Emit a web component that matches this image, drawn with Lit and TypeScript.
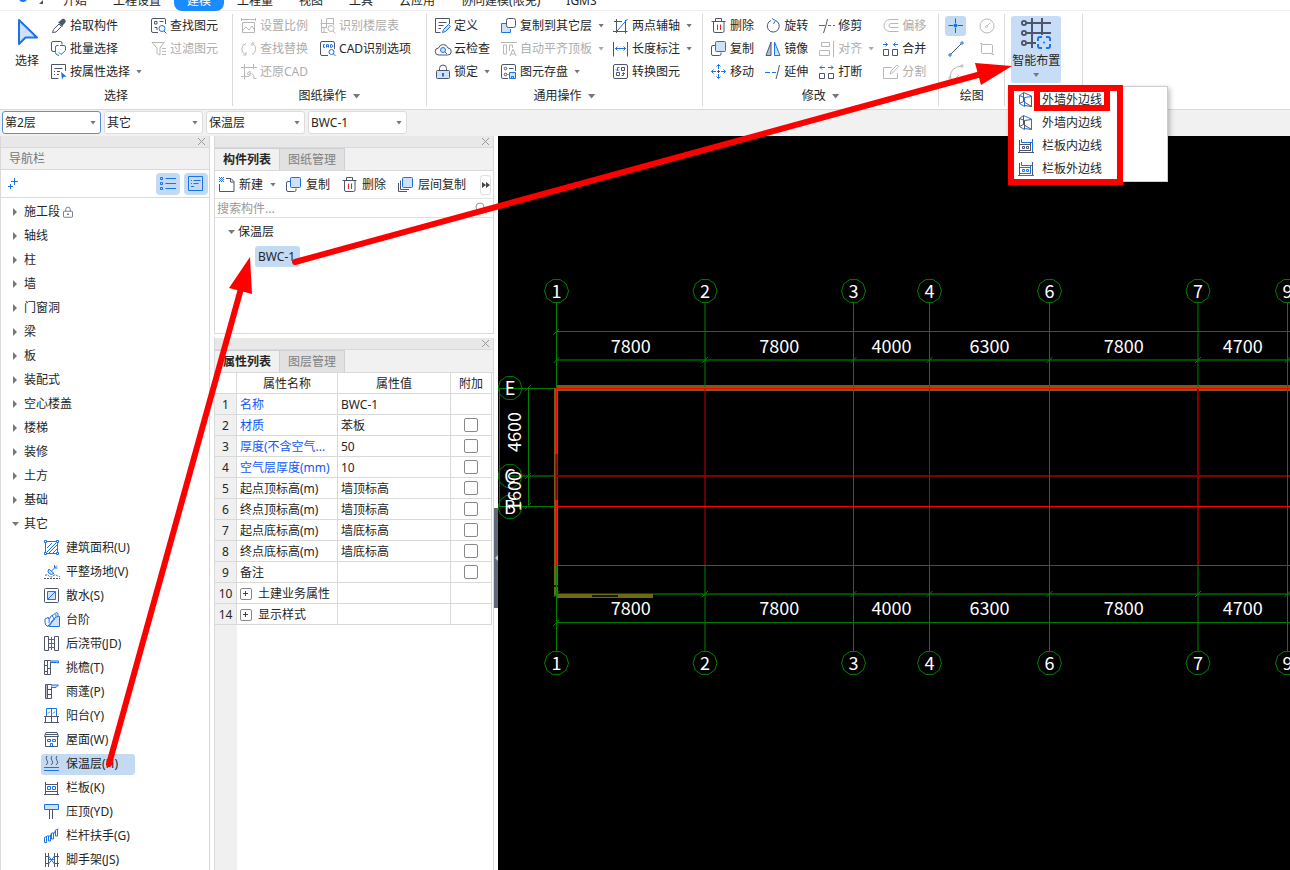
import { LitElement, html, css, svg, nothing, type SVGTemplateResult } from "lit";
import { customElement } from "lit/decorators.js";
import { classMap } from "lit/directives/class-map.js";

/* Icon strokes: .d dark, .b blue, .r red; .f adds the pale blue fill, .s a solid blue one. */
const ICONS: Record<string, SVGTemplateResult> = {
  picker: svg`<path class="d" d="M1.500 14.500l1-3L8 6l2.500 2.500-5.500 5.500z"/><path class="k" d="M7 4l1.500-.5 2-2a2 2 0 0 1 3.500 3.500l-2 2L11.500 9z"/>`,
  batch: svg`<path class="d" d="M4.500 10.500H2Q.5 10.500.5 9V2Q.5.5 2 .5h7.500Q11 .5 11 2v1.500"/><path class="b" d="M7.500 4.500H6Q4.500 4.500 4.500 6v5.500q0 2 2 2.500L8 14.500M9 4.500h4Q14.500 4.500 14.500 6v3"/><path class="b" d="M8 11.500l2 2 4.500-4"/>`,
  byprop: svg`<path class="d" d="M14.500 7V.5H.5v14h7M3.500 4.500h8M3 7.500h1M6 7.500h3M3 10.500h1M6 10.500h2"/><path class="s" d="M10 8l5.500 4.500-3 .5-1.500 2.500z"/>`,
  find: svg`<path class="d" d="M14.500 6V2Q14.500.5 13 .5H2Q.5.500.5 2v11q0 1.500 1.500 1.500h5M3.500 3.500h2.500V6H3.500zM3.500 9.500h2.500V12M8.500 3.500h4"/><circle class="b" cx="11" cy="10.500" r="3"/><path class="b" d="M13 13l2.500 2.500"/>`,
  filter: svg`<path class="d" d="M1 1.500h12L9 7v7l-3-1.500V7zM11 7.500h4M11 10.500h4M11 13.500h4"/>`,
  scale: svg`<path class="d" d="M.5 0v3M14.500 0v3M.5 1.500h14M1.500 4.500h12v10h-12zM2 12l3-3 3 3 3-4 2.500 4"/>`,
  floor: svg`<path class="d" d="M6.500 1v9M.5 5.500h13V.5h-7M13.500 1v6M1.500 1v13.500h6M1 9.500h5.500M4 9.500v5"/><circle class="b" cx="11" cy="10.500" r="3"/><path class="b" d="M13 13l2.500 2.500"/>`,
  replace: svg`<path class="d" d="M4 13.500A6 6 0 0 1 5 2.500M11 13.500A6 6 0 0 0 12 3M2.500 14H5v-3M13.500 2H11v3"/>`,
  cad: svg`<path class="d" d="M14.500 8V2Q14.500.5 13 .5H2Q.5.500.5 2v11q0 1.500 1.500 1.500h6"/><path class="b" d="M5 3.700H3.500v2.600H5M6.500 6.500V3.700h2v2.800M6.500 5.300h2M10.500 3.700v2.600H12l1-1.300-1-1.300z"/><circle class="b" cx="11.500" cy="11" r="2.500"/><path class="b" d="M13.500 13l2 2"/>`,
  restore: svg`<path class="d" d="M3.500 0v15.500M0 3.500h16M0 12.500h8M12.500 0v5M6 9.500l3-2.500v5zM9 9.500q4 0 4 5h2.500"/>`,
  define: svg`<path class="d" d="M14.500 6V.5H.5v14h5M3.500 4.500h8M3.500 7.500h5M3.500 10.500H6"/><path class="b f" d="M7.500 14.500l1-3 5-5 2 2-5 5z"/>`,
  cloud: svg`<path class="d" d="M4 14a3.500 3.500 0 0 1-.5-7A5 5 0 0 1 13 7a3.500 3.500 0 0 1-.500 7z"/><circle class="b f" cx="8" cy="9" r="2.500"/><path class="b" d="M10 11l2 2"/>`,
  lock: svg`<path class="d" d="M4.500 6V4.500a3.500 3.500 0 0 1 7 0V6"/><rect class="d f" x="1.500" y="6.500" width="13" height="8" rx="1"/><path class="b w" d="M8 9v3.500"/>`,
  copyto: svg`<path class="b f" d="M6 5.500H.5v9h9V11"/><rect class="d wf" x="5.500" y=".5" width="9" height="9" rx="2"/>`,
  auto: svg`<path class="d" d="M0 1.500h16M2.500 4h3v9h-3zM8.500 10V4h3v3M9 15l3-7 3 7M10 13h4"/>`,
  disk: svg`<path class="d" d="M14.500 7V2Q14.500.5 13 .5H2Q.5.500.5 2v11q0 1.500 1.500 1.500h5M8 4.500h4.500M6.500 10.500h1"/><circle class="d" cx="4.500" cy="4.500" r="1.300"/><circle class="d" cx="4.500" cy="10.500" r="1.300"/><path class="b f" d="M8.500 8.500h6v6h-6zM10.500 14.500V12.500h2v2"/>`,
  twopt: svg`<path class="d" d="M3.500 1v14M0 13.500h14.500M12.500 2v13.500M1 3.500h8"/><path class="b" d="M4 13L14.500 1"/>`,
  length: svg`<path class="d" d="M.5 1v14.500M14.500 1v14.500"/><path class="b" d="M2 7.500h11M4.500 5.500l-2 2 2 2M10.500 5.500l2 2-2 2"/>`,
  convert: svg`<rect class="d" x=".5" y=".5" width="14" height="14" rx="1.500"/><path class="d" d="M8.500 3.500h3v3h-3zM3.500 8.500h3v3h-3z"/><path class="b" d="M6.500 3.500h-2v3M3 5.500L4.500 7 6 5.500M8.500 11.500h2v-3M9 10l1.500-1.500L12 10"/>`,
  trash: svg`<path class="d" d="M.5 3.500h14M4.500 3.500v-3h6v3M2.500 3.500V13q0 1.500 1.500 1.500h7.500q1.500 0 1.500-1.500V3.500"/><path class="r" d="M6.500 6.500V12M9.500 6.500V12"/>`,
  copy: svg`<path class="d" d="M4.500 4.500H2Q.5 4.500.5 6v7q0 1.500 1.500 1.500h6.500q1.500 0 1.500-1.500v-1.500"/><rect class="b f" x="4.500" y=".5" width="10" height="10" rx="1"/>`,
  move: svg`<path class="b" d="M7.500 .5V5M7.500 10v4.500M.5 7.500H5M10 7.500h4.500M5.500 2.500l2-2 2 2M5.500 12.500l2 2 2-2M2.500 5.500l-2 2 2 2M12.500 5.500l2 2-2 2"/><path class="d" d="M6 7.500h3M7.500 6v3"/>`,
  rotate: svg`<path class="d" d="M6 2.500a6 6 0 1 0 4.500 0"/><path class="b" d="M7 .5l3.500 2-2 3.500"/>`,
  mirror: svg`<path class="d g" d="M6 1v13.500H1z"/><path class="b f" d="M9.500 1v13.500H15z"/>`,
  extend: svg`<path class="b" d="M0 8.500h5M7 8.500h4"/><path class="d" d="M11 15q2-7 3.500-14"/>`,
  trim: svg`<path class="b" d="M0 7.500h6M9 7.500h3M14 7.500h2"/><path class="d" d="M4.500 15Q7 8 8.500 1"/>`,
  align: svg`<path class="d" d="M14.500 0v16M2.500 1.500h8v4h-8zM.5 9.500h10v5H.5z"/>`,
  brk: svg`<path class="d" d="M.5 9.500h5v5h-5zM9.500 9.500h5v5h-5z"/><path class="b" d="M6 3.500H1M3 1.500l-2 2 2 2M9 3.500h5M12 1.500l2 2-2 2"/>`,
  offset: svg`<path class="d" d="M15.500 1.500H7a6 6 0 0 0 0 12h8.500M15.500 5.500H8a2 2 0 0 0 0 4h7.500"/>`,
  merge: svg`<path class="d" d="M.5 8.500h5v6h-5zM9.500 8.500h5v6h-5z"/><path class="b" d="M0 3.500h4.500M2.500 1.500l2 2-2 2M15 3.500h-4.500M12.500 1.500l-2 2 2 2"/>`,
  split: svg`<path class="d" d="M9 3.500H.5v11h14V9M7 10l1-3 6-6 1.500 1.500-6 6.500z"/>`,
  point: svg`<path class="d" d="M7.500 .5V5M7.500 10v5M.5 7.500H5M10 7.500h5"/><circle class="s" cx="7.500" cy="7.500" r="2"/>`,
  line: svg`<path class="d" d="M3 13L13 3"/><circle class="b f" cx="14" cy="2" r="1.200"/><circle class="b f" cx="2" cy="14" r="1.200"/>`,
  arc: svg`<path class="d" d="M2 14Q2 3 14 2M8 14l3-3"/><circle class="d" cx="14" cy="2" r="1.200"/><circle class="d" cx="2" cy="14" r="1.200"/>`,
  circle: svg`<circle class="d" cx="8" cy="8" r="7"/><path class="d" d="M8 8l3.500-3.500"/><circle class="d" cx="7.500" cy="8.500" r="1"/>`,
  rect: svg`<rect class="d" x="2.500" y="3.500" width="11" height="9" rx="1"/><path class="d" d="M1 2.500h2v2M15 13.500h-2v-2"/>`,
  wallA: svg`<path class="b" d="M1.500 3.500v8l5 3v-9zM6.500 5.500l7-1M1.500 3.500l4-3"/><path class="d" d="M5.500.5l8 3.500v10.500l-7-1M5.500 1v8.500l-4 2M5.500 9.500l8 5"/>`,
  wallB: svg`<path class="d" d="M1.500 3.500v8l5 3v-9zM6.500 5.500l7-1M1.500 3.500l4-3"/><path class="b" d="M5.500.5l8 3.500v10.500l-7-1"/><path class="d" d="M5.500 1v8.500l-4 2M5.500 9.500l8 5"/>`,
  railA: svg`<path class="b" d="M3.500 1v3.500h11M14.500 1v13.500"/><path class="d" d="M1.500 2v12M12.500 5v8M0 14.500h16M2 6.500h10M2 12.500h11M4.500 8.500h2v2h-2zM8.500 8.500h2v2h-2z"/>`,
  railB: svg`<path class="d" d="M14.500 1v13.500M1.500 2v12"/><path class="b" d="M3.500 1v3.500h11M12.500 5v8M0 14.500h16M2 6.500h10M2 12.500h11M4.500 8.500h2v2h-2zM8.500 8.500h2v2h-2z"/>`,
  area: svg`<path class="b" d="M1.500 1.500h12v12h-12zM3 8l5-5M3 12l9-9M5 13l8-8M9 13l4-4"/><path class="b wf" d="M.5.500h2v2h-2zM12.500.5h2v2h-2zM.5 12.500h2v2h-2zM12.500 12.500h2v2h-2z"/>`,
  level: svg`<path class="b f" d="M5 5l5 4.500q-3 2-5 0t0-4.500z"/><path class="b" d="M7.500 7L13 1.500M10.500 1v3h3"/><path class="d dash" d="M1 11.500q2-1.500 4 .5t4 0 4-.5 3 1M0 14.500h16"/>`,
  apron: svg`<rect class="d" x=".5" y=".5" width="14" height="14" rx="1"/><path class="b f" d="M3.500 3.500h8v8h-8z"/><path class="b" d="M4 11l7-7"/>`,
  steps: svg`<path class="b f" d="M5 14.500h10.500V4.500L12 4z"/><path class="b wf" d="M1 7l3-1.500 2 1 1-2.500 2.500-1L12 .5q3 0 2 4l-3 1q0 3-3 3-.5 3-3 4l-1 2q-3-1-3-4z"/><path class="b" d="M4 6q2 1 1 5M8 4q2 1 2 4M11 1.500q1.500 1 1 3"/>`,
  strip: svg`<path class="d" d="M.5.5h4v14h-4zM10.500.5h4v14h-4z"/><path class="b" d="M5 3.500h5M5 7.500h5M5 11.500h5M7.500 1v13"/>`,
  eave: svg`<path class="d" d="M.5.5h6v14h-6zM3.500 1v14M.5 5.500h3M3.500 8.500h3M.5 11.500h3"/><path class="b f" d="M6.500 1h8v2l-2-.5h-6"/>`,
  canopy: svg`<path class="d g" d="M1.500.5h2v14h-2z"/><path class="d" d="M3.500.5h4v14h-4M3.500 5.500h4M3.500 10.500h4"/><path class="b f" d="M7.500 1h7L12 3.500H7.500"/>`,
  balcony: svg`<path class="b" d="M2.500 8V.5h10V8M7.500.5V8M4 5.500l2-2M9 5.500l2-2"/><path class="d" d="M0 8.500h15M1.500 8.500v6h12v-6M7.500 8.500v6M0 14.500h15"/>`,
  roof: svg`<path class="d" d="M2 .5h11l1.500 4H.5zM1.500 5v9.500h12V5M1 2.500h13"/><path class="b" d="M3.500 7.500h3v2h-3zM8.500 7.500h3v2h-3zM6.500 14.500v-3h2v3"/>`,
  insul: svg`<path class="d" d="M3 0q-2 2 0 4.500T2 9M8 0q-2 2 0 4.500T7 9M13 0q-2 2 0 4.500T12 9"/><path class="b" d="M0 11.500h15M0 14.500h15"/>`,
  slab: svg`<path class="d" d="M1.500 2v12.500M13.500 2v12.500M0 14.500h15M2 4.500h12M2 11.500h12"/><path class="b" d="M3.500 6.500h3v3h-3zM8.500 6.500h3v3h-3z"/>`,
  coping: svg`<path class="b f" d="M.5.5h14v5H.5z"/><path class="d" d="M5.500 6v9M8.500 6v9"/>`,
  handrail: svg`<path class="b" d="M.5 9.500l3-1.500h3l1-3h3l1-3 3-1M.5 9.500v5h2V9M4.500 8v5h2V8M7.500 6v5h2V5M11.500 3v5h2V1.500"/>`,
  scaffold: svg`<path class="d" d="M1.500 1v14M4.500 1v14M10.500 1v14M13.500 1v14M1 4.500h3.500M10.500 4.500H15M1 11.500h3.500M10.500 11.500H15"/><path class="b" d="M4.500 4l6 8M10.500 4l-6 8M4.500 7.500h6"/>`,
  create: svg`<path class="d" d="M7 1.500h5l3 3v10H.5V7M11.500 2v3h3.500"/><path class="s" d="M0 0h1v1H0zM2 0h1v1H2zM4 0h1v1H4zM1 1h1v1H1zM3 1h1v1H3zM0 2h1v1H0zM2 2h1v1H2zM4 2h1v1H4zM1 3h1v1H1zM3 3h1v1H3zM0 4h1v1H0zM2 4h1v1H2zM4 4h1v1H4z"/>`,
  floorcopy: svg`<path class="d" d="M.5 6v8.500H9M2.500 3.500v9H11"/><rect class="b f" x="4.500" y=".5" width="10" height="10" rx="1"/>`,
  padlock: svg`<path class="d" d="M5 7V4.500a3 3 0 0 1 6 0V7"/><rect class="d" x="2" y="7" width="12" height="8" rx="1"/><path class="d w" d="M8 10v2"/>`,
};

const icon = (name: string) =>
  html`<svg class="ic" viewBox="0 0 16 16" aria-hidden="true">${ICONS[name]}</svg>`;

interface Cmd { i: string; t: string; off?: boolean; menu?: boolean }
const c = (i: string, t: string, flags = ""): Cmd => ({
  i, t, off: flags.includes("x"), menu: flags.includes("m"),
});

const TABS = ["开始", "工程设置", "建模", "工程量", "视图", "工具", "云应用", "协同建模(限免)", "IGMS"];

const GROUPS = {
  select: [
    [c("picker", "拾取构件"), c("batch", "批量选择"), c("byprop", "按属性选择", "m")],
    [c("find", "查找图元"), c("filter", "过滤图元", "x")],
  ],
  drawing: [
    [c("scale", "设置比例", "x"), c("replace", "查找替换", "x"), c("restore", "还原CAD", "x")],
    [c("floor", "识别楼层表", "x"), c("cad", "CAD识别选项")],
  ],
  common: [
    [c("define", "定义"), c("cloud", "云检查"), c("lock", "锁定", "m")],
    [c("copyto", "复制到其它层", "m"), c("auto", "自动平齐顶板", "xm"), c("disk", "图元存盘", "m")],
    [c("twopt", "两点辅轴", "m"), c("length", "长度标注", "m"), c("convert", "转换图元")],
  ],
  modify: [
    [c("trash", "删除"), c("copy", "复制"), c("move", "移动")],
    [c("rotate", "旋转"), c("mirror", "镜像"), c("extend", "延伸")],
    [c("trim", "修剪"), c("align", "对齐", "xm"), c("brk", "打断")],
    [c("offset", "偏移", "x"), c("merge", "合并"), c("split", "分割", "x")],
  ],
};

const NAV = ["施工段", "轴线", "柱", "墙", "门窗洞", "梁", "板", "装配式", "空心楼盖", "楼梯", "装修", "土方", "基础"];
const OTHER: [string, string][] = [
  ["area", "建筑面积(U)"], ["level", "平整场地(V)"], ["apron", "散水(S)"], ["steps", "台阶"],
  ["strip", "后浇带(JD)"], ["eave", "挑檐(T)"], ["canopy", "雨蓬(P)"], ["balcony", "阳台(Y)"],
  ["roof", "屋面(W)"], ["insul", "保温层(H)"], ["slab", "栏板(K)"], ["coping", "压顶(YD)"],
  ["handrail", "栏杆扶手(G)"], ["scaffold", "脚手架(JS)"],
];

interface Prop { n: number; name: string; value?: string; blue?: boolean; check?: boolean; group?: boolean }
const PROPS: Prop[] = [
  { n: 1, name: "名称", value: "BWC-1", blue: true },
  { n: 2, name: "材质", value: "苯板", blue: true, check: true },
  { n: 3, name: "厚度(不含空气...", value: "50", blue: true, check: true },
  { n: 4, name: "空气层厚度(mm)", value: "10", blue: true, check: true },
  { n: 5, name: "起点顶标高(m)", value: "墙顶标高", check: true },
  { n: 6, name: "终点顶标高(m)", value: "墙顶标高", check: true },
  { n: 7, name: "起点底标高(m)", value: "墙底标高", check: true },
  { n: 8, name: "终点底标高(m)", value: "墙底标高", check: true },
  { n: 9, name: "备注", check: true },
  { n: 10, name: "土建业务属性", group: true },
  { n: 14, name: "显示样式", group: true },
];

const base = css`
  * { box-sizing: border-box; }
  button, select, input { font: inherit; color: inherit; }
  button { border: 0; padding: 0; background: none; text-align: left; white-space: nowrap; }
  .ic { width: 16px; height: 16px; flex: none; fill: none; overflow: visible; }
  .d { stroke: #4d566b; }
  .b { stroke: #1a73e8; }
  .r { stroke: #e02828; }
  .w { stroke-width: 2; }
  .f { fill: #cfe1fa; }
  .wf { fill: #fff; }
  .g { fill: #b9bec9; }
  .k { fill: #4d566b; }
  .s { fill: #1a73e8; }
  .dash { stroke-dasharray: 2 1; }
  .tri { flex: none; width: 6px; height: 4px; background: #777; clip-path: polygon(0 0, 100% 0, 50% 100%); }
  .tri.big { width: 8px; height: 5px; }
  .tri.side { width: 4px; height: 8px; clip-path: polygon(0 0, 100% 50%, 0 100%); }
`;

/* Plan view: axis grid, dimensions and the walls drawn so far. */
@customElement("plan-canvas")
class PlanCanvas extends LitElement {
  static styles = css`
    :host { display: block; min-width: 0; background: #000; overflow: hidden; }
    .plan { display: block; width: 100%; height: 100%; font-family: "Noto Sans CJK SC", sans-serif; font-size: 18px; }
    .lab { fill: #fff; text-anchor: middle; }
    .axis { stroke: #008000; fill: none; }
    .dim { stroke: #004c00; stroke-width: 2; }
    .red { stroke: #f00; }
    .deep { stroke: #800000; stroke-width: 2; }
    .mid { stroke: #c00000; }
    .wall { fill: #7d5a1c; }
    .olive { fill: #6e6a12; }
    .gap { fill: #101800; }
  `;

  private bubble(x: number, y: number, t: string) {
    const pts = Array.from({ length: 10 }, (_, k) => {
      const a = ((k + 0.5) * Math.PI) / 5 - Math.PI / 10;
      return `${(x + 12 * Math.cos(a)).toFixed(1)},${(y + 12 * Math.sin(a)).toFixed(1)}`;
    }).join(" ");
    return svg`<polygon class="axis" points=${pts}></polygon><text class="lab" x=${x} y=${y + 7}>${t}</text>`;
  }

  private tick(x: number, y: number) {
    return svg`<path class="axis" d=${`M${x - 3} ${y + 3}l6 -6`}></path>`;
  }

  render() {
    const axes: [number, string, string][] = [
      [58.5, "1", "red"], [207, "2", "mid"], [355.5, "3", "red"], [431.5, "4", "mid"],
      [551.5, "6", "red"], [700, "7", "deep"], [789.5, "9", "red"],
    ];
    const spans = ["7800", "7800", "4000", "6300", "7800", "4700"];
    return html`<svg class="plan" role="img" aria-label="轴网平面图">
      <path class="dim" d="M58 224H2000M58 458H2000M12 340H58"></path>
      <path class="axis" d="M58 195.500H2000M58 486.500H2000M1 252.500H58M1 370.500H58M1.500 252V371M30.500 252V371"></path>
      <rect class="wall" x="58" y="249" width="2000" height="6"></rect>
      <rect class="wall" x="56" y="252" width="4" height="178"></rect>
      <rect class="olive" x="56" y="430" width="4" height="30"></rect>
      <rect class="olive" x="58" y="458" width="97" height="4"></rect>
      <rect class="gap" x="94" y="459" width="26" height="2"></rect>
      <rect class="gap" x="56" y="449" width="4" height="2"></rect>
      ${axes.map(([x, t]) => svg`
        <path class="axis" d=${`M${x} 167V252M${x} 430V515`}></path>
        ${this.tick(x, 224)}${this.tick(x, 458)}
        ${this.bubble(x, 155, t)}${this.bubble(x, 527, t)}`)}
      ${this.tick(58, 196)}${this.tick(58, 487)}
      ${this.tick(30, 252)}${this.tick(30, 340)}${this.tick(30, 370)}
      <path class="deep" d="M58 340H2000"></path>
      ${axes.map(([x, , k]) => svg`<path class=${k} d=${`M${x} 252V430`}></path>`)}
      <path class="red" d="M58 252.500H2000M58 370.500H2000M58 429.500H2000"></path>
      <path class="deep" d="M58.500 318V364"></path>
      ${spans.map((t, i) => {
        const x = (axes[i][0] + axes[i + 1][0]) / 2;
        return svg`<text class="lab" x=${x} y="217">${t}</text><text class="lab" x=${x} y="479">${t}</text>`;
      })}
      ${this.bubble(12, 252, "E")}${this.bubble(12, 340, "C")}${this.bubble(12, 371, "B")}
      <text class="lab" transform="translate(23 296) rotate(-90)">4600</text>
      <text class="lab" transform="translate(23 355) rotate(-90)">1600</text>
    </svg>`;
  }
}

@customElement("app-root")
class AppRoot extends LitElement {
  static styles = [base, css`
    :host {
      display: flex; flex-direction: column; position: relative; height: 100vh; overflow: hidden;
      background: #fff; color: #262626; cursor: default;
      font: 12px/20px "Noto Sans", "Noto Sans CJK SC", sans-serif;
    }

    .tabs { display: flex; align-items: flex-end; height: 11px; flex: none; border-bottom: 1px solid #f0f0f0; }
    .logo { width: 50px; height: 11px; flex: none; }
    .tab { height: 20px; line-height: 20px; padding: 0 13px; flex: none; margin-bottom: -1px; }
    .tab.on { background: #1a8cff; color: #fff; border-radius: 8px; }

    .ribbon { display: flex; flex: none; padding: 3px 0; height: 99px; border-bottom: 1px solid #d9d9d9; }
    .group { display: flex; flex-direction: column; flex: none; border-right: 1px solid #d9d9d9; }
    .body { display: flex; gap: 11px; height: 69px; padding: 0 14px 0 8px; }
    .body.first { padding-left: 0; }
    .body.loose { gap: 12px; padding-right: 15px; }
    .body.tight { padding-right: 12px; }
    .col { display: flex; flex-direction: column; }
    .cmd { display: flex; align-items: center; gap: 3px; height: 23px; }
    .cmd .tri { margin-left: 3px; margin-right: -2px; }
    .off { color: #adadad; }
    .off .ic * { stroke: #b8b8b8; fill: none; }
    .off .tri { background: #aaa; }
    .cap { display: flex; align-items: center; justify-content: center; gap: 6px; padding-top: 3px; }
    .bigsel { display: flex; flex-direction: column; align-items: center; width: 40px; padding-left: 14px; gap: 4px; }
    .bigsel svg { width: 24px; height: 32px; margin-top: 1px; }
    .draw { display: grid; grid-template-columns: 21px 21px; column-gap: 10px; padding: 0 7px 0 6px; height: 69px; }
    .tool { display: grid; place-items: center; width: 21px; height: 20px; align-self: center; border-radius: 3px; }
    .tool.on { background: #c3daf3; }
    .smartbox { padding: 2px 21px 0 6px; }
    .smart { display: flex; flex-direction: column; align-items: center; width: 50px; height: 67px; background: #c7dcf7; border-radius: 3px; }
    .smart svg { width: 32px; height: 32px; fill: none; margin-top: 1px; }
    .smart .lbl { line-height: 24px; }

    .filters { display: flex; gap: 3px; flex: none; height: 26px; padding: 1px 2px 2px; background: #f1f1f1; }
    .pick { display: grid; width: 99px; align-items: center; }
    .pick > * { grid-area: 1 / 1; }
    .pick select { appearance: none; width: 100%; height: 23px; padding: 0 2px; border: 1px solid #dcdcdc; border-radius: 3px; background: #fff; outline: 0; }
    .pick.on select { border-color: #5b8de0; }
    .pick .tri { justify-self: end; margin-right: 5px; pointer-events: none; }

    .work { display: flex; flex: 1; min-height: 0; }
    .nav { display: flex; flex-direction: column; width: 210px; flex: none; border: solid #d9d9d9; border-width: 0 1px; overflow: hidden; }
    .mids { display: flex; flex-direction: column; gap: 4px; width: 280px; margin-left: 4px; flex: none; }
    .panel { display: flex; flex-direction: column; border: solid #d9d9d9; border-width: 0 1px 1px; }
    .panel.comp { height: 198px; flex: none; }
    .panel.props { flex: 1; min-height: 0; overflow: hidden; border-bottom: 0; }
    .grip { display: flex; justify-content: flex-end; align-items: center; height: 12px; flex: none; padding-right: 4px; background: #e8e8e8; border-bottom: 1px solid #d9d9d9; }
    .grip button { display: flex; }
    .grip svg { width: 7px; height: 7px; stroke: #9a9a9a; }
    .head { height: 22px; line-height: 22px; flex: none; padding-left: 8px; background: #f1f1f1; border-bottom: 1px solid #d9d9d9; color: #777; }
    .navbar { display: flex; align-items: center; gap: 4px; height: 28px; flex: none; padding: 0 1px 0 6px; border-bottom: 1px solid #d9d9d9; }
    .navbar .add { margin-right: auto; }
    .add svg { display: block; width: 12px; height: 12px; }
    .tgl { display: grid; place-items: center; width: 24px; height: 22px; border-radius: 4px; background: #c3daf3; }
    .tree { list-style: none; margin: 0; padding: 2px 0 0; }
    .tree li { display: flex; height: 24px; align-items: center; }
    .node { display: flex; align-items: center; height: 22px; line-height: 22px; gap: 7px; padding-left: 12px; }
    .node .tri { width: 7px; margin-right: -2px; margin-left: -1px; }
    .node .tri.side { width: 4px; margin: 0; }
    .node .ic { width: 12px; height: 12px; margin-left: -5px; }
    .leaf { display: flex; align-items: center; height: 21px; line-height: 22px; gap: 6px; margin-left: 40px; padding: 0 17px 0 3px; border-radius: 3px; }
    .leaf.on, .item { background: #c3daf3; }

    .ptabs { display: flex; height: 23px; flex: none; background: #f1f1f1; border-bottom: 1px solid #d9d9d9; }
    .ptab { padding: 0 8px; width: 65px; border: solid #cfcfd6; border-width: 1px 1px 0 0; background: #e1e1e1; color: #808080; }
    .ptab.on { background: #f1f1f1; color: #262626; font-weight: bold; }
    .tools { display: flex; align-items: center; gap: 12px; height: 28px; flex: none; padding: 0 2px 0 4px; border-bottom: 1px solid #e4e4e4; line-height: 22px; }
    .tools .cmd { gap: 4px; }
    .more { display: grid; place-items: center; width: 11px; height: 20px; margin-left: auto; border: 1px solid #e0e0e0; border-radius: 3px; }
    .more svg { width: 8px; height: 6px; fill: #444; }
    .search { display: flex; align-items: center; height: 19px; flex: none; padding: 0 6px 0 2px; border-bottom: 1px solid #e0e0e0; }
    .search input { flex: 1; min-width: 0; height: 18px; border: 0; padding: 1px 0 0; outline: 0; background: none; }
    .search input::placeholder { color: #999; }
    .search svg { width: 12px; height: 12px; fill: none; stroke: #999; }
    .tree .root { padding-left: 14px; gap: 5px; }
    .item { height: 21px; line-height: 22px; margin-left: 40px; padding: 0 5px 0 3px; border-radius: 3px; }

    .sheet { flex: 1; background: linear-gradient(90deg, #f0f0f0 22px, #fff 22px); }
    table { width: 277px; table-layout: fixed; border-collapse: separate; border-spacing: 0; }
    .c0 { width: 22px; } .c1 { width: 101px; } .c2 { width: 113px; } .c3 { width: 41px; }
    th, td { height: 21px; padding: 1px 3px 0; line-height: 19px; font-weight: normal; border: solid #d9d9d9; border-width: 0 1px 1px 0; background: #fff; white-space: nowrap; }
    tbody th { padding: 1px 0 0; background: #f0f0f0; text-align: center; }
    .blue { color: #1257f5; }
    .mid { text-align: center; padding-top: 0; }
    .mid input { display: block; appearance: none; width: 14px; height: 14px; margin: 0 auto; border: 1px solid #888; border-radius: 2px; background: #fff; }
    .fold { display: flex; align-items: center; gap: 6px; }
    .plus { display: grid; place-items: center; width: 12px; height: 12px; border: 1px solid #888; border-radius: 2px; }
    .plus svg { width: 6px; height: 6px; stroke: #444; }

    .split { display: flex; width: 4px; flex: none; }
    .split button { display: flex; align-items: center; justify-content: flex-end; width: 4px; height: 100px; align-self: center; margin-top: 110px; background: #5f6b78; }
    .split .tri { width: 3px; height: 6px; background: #ccc; clip-path: polygon(100% 0, 100% 100%, 0 50%); }
    plan-canvas { flex: 1; }

    .menu { position: absolute; left: 1008px; top: 86px; width: 160px; margin: 0; padding: 1px 0; list-style: none; background: #fff; border: 1px solid #ccc; box-shadow: 2px 2px 5px rgba(0, 0, 0, .25); }
    .menu button { display: flex; align-items: center; gap: 8px; width: 100%; height: 23px; padding-left: 9px; }
    .marks { position: absolute; left: 0; top: 0; width: 100%; height: 100%; pointer-events: none; fill: none; stroke: #f00; stroke-width: 6; stroke-linecap: round; }
    .marks .tip { fill: #f00; stroke: none; }
  `];

  private cmd(x: Cmd) {
    return html`<button class=${classMap({ cmd: true, off: !!x.off })} ?disabled=${x.off}>
      ${icon(x.i)}<span>${x.t}</span>${x.menu ? html`<i class="tri"></i>` : nothing}
    </button>`;
  }

  private cols(cs: Cmd[][]) {
    return cs.map((k) => html`<div class="col">${k.map((x) => this.cmd(x))}</div>`);
  }

  private cap(t: string, menu = true) {
    return html`<div class="cap">${t}${menu ? html`<i class="tri big"></i>` : nothing}</div>`;
  }

  private grip() {
    return html`<div class="grip"><button aria-label="关闭"><svg viewBox="0 0 7 7"><path d="M0 0l7 7M7 0L0 7"/></svg></button></div>`;
  }

  private ribbon() {
    return html`<div class="ribbon">
      <section class="group">
        <div class="body first">
          <button class="bigsel">
            <svg viewBox="0 0 24 32"><path class="b f" stroke-width="2" stroke-linejoin="round" d="M4 5v24l6.500-6.500H22z"/></svg>
            <span>选择</span>
          </button>
          ${this.cols(GROUPS.select)}
        </div>
        ${this.cap("选择", false)}
      </section>
      <section class="group"><div class="body loose">${this.cols(GROUPS.drawing)}</div>${this.cap("图纸操作")}</section>
      <section class="group"><div class="body tight">${this.cols(GROUPS.common)}</div>${this.cap("通用操作")}</section>
      <section class="group"><div class="body tight">${this.cols(GROUPS.modify)}</div>${this.cap("修改")}</section>
      <section class="group">
        <div class="draw">
          <button class="tool on" aria-label="点">${icon("point")}</button>
          <button class="tool off" aria-label="圆">${icon("circle")}</button>
          <button class="tool" aria-label="直线">${icon("line")}</button>
          <button class="tool off" aria-label="矩形">${icon("rect")}</button>
          <button class="tool off" aria-label="弧">${icon("arc")}</button>
        </div>
        ${this.cap("绘图", false)}
      </section>
      <section class="group">
        <div class="smartbox">
          <button class="smart">
            <svg viewBox="0 0 32 32">
              <path class="d" stroke-width="2" d="M6 6h25M6 16h25M6 26h10M12 1v30M22 1v17"/>
              <g class="d wf" stroke-width="2"><circle cx="4" cy="6" r="2"/><circle cx="4" cy="16" r="2"/><circle cx="4" cy="26" r="2"/></g>
              <path class="b" stroke-width="2" d="M18 24v-2q0-2 2-2h2M26 20h2q2 0 2 2v2M30 27v2q0 2-2 2h-2M22 31h-2q-2 0-2-2v-2"/>
              <circle class="s" cx="24" cy="25.500" r="1"/>
            </svg>
            <span class="lbl">智能布置</span><i class="tri"></i>
          </button>
        </div>
      </section>
    </div>`;
  }

  private nav() {
    return html`<aside class="nav">
      ${this.grip()}
      <div class="head">导航栏</div>
      <div class="navbar">
        <button class="add" aria-label="添加"><svg viewBox="0 0 12 12"><path class="b" d="M7.500 0v7M4 3.500h7M3.500 6v5M1 8.500h5"/></svg></button>
        <button class="tgl" aria-label="列表"><svg class="ic" viewBox="0 0 16 16"><path class="b" d="M5.500 2.500H16M5.500 7.500H16M5.500 12.500H16M.5 1.500h2v2h-2zM.5 6.500h2v2h-2zM.5 11.500h2v2h-2z"/></svg></button>
        <button class="tgl" aria-label="详情"><svg class="ic" viewBox="0 0 16 16"><path class="b" d="M.5.5h14v14H.5zM5.500 4.500h7M3 4.500h1M5.500 7.500h5M3 7.500h1M3 10.500h3"/></svg></button>
      </div>
      <ul class="tree">
        ${NAV.map((t, i) => html`<li><button class="node"><i class="tri side"></i>${t}${i === 0 ? icon("padlock") : nothing}</button></li>`)}
        <li><button class="node"><i class="tri"></i>其它</button></li>
        ${OTHER.map(([i, t]) => html`<li><button class=${classMap({ leaf: true, on: i === "insul" })}>${icon(i)}${t}</button></li>`)}
      </ul>
    </aside>`;
  }

  private components() {
    return html`<section class="panel comp">
      ${this.grip()}
      <div class="ptabs"><button class="ptab on">构件列表</button><button class="ptab">图纸管理</button></div>
      <div class="tools">
        ${this.cmd(c("create", "新建", "m"))}${this.cmd(c("copy", "复制"))}${this.cmd(c("trash", "删除"))}${this.cmd(c("floorcopy", "层间复制"))}
        <button class="more" aria-label="更多"><svg viewBox="0 0 8 6"><path d="M0 0l4 3-4 3zM4 0l4 3-4 3z"/></svg></button>
      </div>
      <div class="search">
        <input type="text" placeholder="搜索构件..." aria-label="搜索构件">
        <svg viewBox="0 0 12 12"><circle cx="5" cy="5" r="4"/><path d="M8 8l3.500 3.500"/></svg>
      </div>
      <ul class="tree">
        <li><button class="node root"><i class="tri"></i>保温层</button></li>
        <li><button class="item">BWC-1</button></li>
      </ul>
    </section>`;
  }

  private properties() {
    return html`<section class="panel props">
      ${this.grip()}
      <div class="ptabs"><button class="ptab on">属性列表</button><button class="ptab">图层管理</button></div>
      <div class="sheet">
        <table>
          <colgroup><col class="c0"><col class="c1"><col class="c2"><col class="c3"></colgroup>
          <thead><tr><th></th><th scope="col">属性名称</th><th scope="col">属性值</th><th scope="col">附加</th></tr></thead>
          <tbody>
            ${PROPS.map((p) => html`<tr>
              <th scope="row">${p.n}</th>
              <td class=${classMap({ blue: !!p.blue })}>${p.group
                ? html`<div class="fold"><button class="plus" aria-label="展开"><svg viewBox="0 0 6 6"><path d="M0 2.500h5M2.500 0v5"/></svg></button>${p.name}</div>`
                : p.name}</td>
              <td>${p.value ?? nothing}</td>
              <td class="mid">${p.check ? html`<input type="checkbox" aria-label=${p.name}>` : nothing}</td>
            </tr>`)}
          </tbody>
        </table>
      </div>
    </section>`;
  }

  render() {
    return html`
      <nav class="tabs">
        <svg class="logo" viewBox="0 0 50 11"><circle class="s" cx="23" cy="-1" r="4"/><path class="k" d="M43 1v4h-4z"/></svg>
        ${TABS.map((t) => html`<button class=${classMap({ tab: true, on: t === "建模" })}>${t}</button>`)}
      </nav>
      ${this.ribbon()}
      <div class="filters">
        ${[["楼层", "第2层"], ["类别", "其它"], ["构件类型", "保温层"], ["构件", "BWC-1"]].map(([l, v], i) => html`
          <div class=${classMap({ pick: true, on: i === 0 })}>
            <select aria-label=${l}><option>${v}</option></select><i class="tri"></i>
          </div>`)}
      </div>
      <main class="work">
        ${this.nav()}
        <div class="mids">${this.components()}${this.properties()}</div>
        <div class="split"><button aria-label="收起"><i class="tri"></i></button></div>
        <plan-canvas></plan-canvas>
      </main>
      <ul class="menu">
        ${[["wallA", "外墙外边线"], ["wallB", "外墙内边线"], ["railA", "栏板内边线"], ["railB", "栏板外边线"]].map(([i, t]) => html`
          <li><button>${icon(i)}${t}</button></li>`)}
      </ul>
      <svg class="marks" aria-hidden="true">
        <path d="M109 764L242 285M295 262L985 73"/>
        <path class="tip" d="M250 257L229 288L252 294zM1012 66L975 63L981 85z"/>
        <g stroke-linecap="butt"><rect x="1011" y="88" width="109" height="94"/><rect x="1037" y="89" width="70" height="19"/></g>
      </svg>`;
  }
}
